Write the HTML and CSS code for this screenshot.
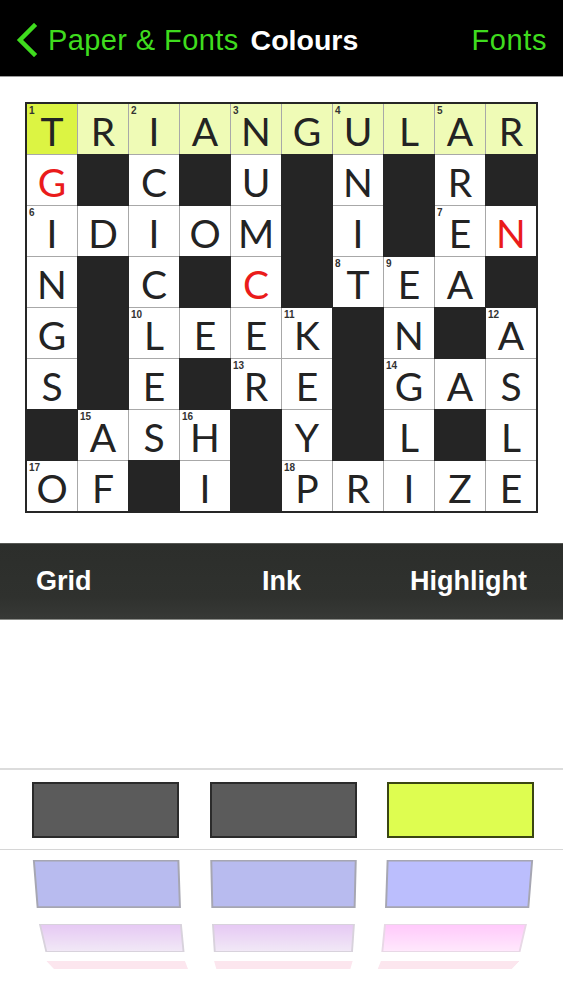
FILE: index.html
```html
<!DOCTYPE html>
<html lang="en">
<head>
<meta charset="utf-8">
<title>Colours</title>
<link rel="stylesheet" href="styles.css">
</head>
<body>
<header class="navbar">
  <a class="back">
    <svg class="chev" width="26" height="34" viewBox="0 0 26 34"><path d="M20 3 L6 17 L20 31" fill="none" stroke="#3fdc1e" stroke-width="4.5" stroke-linecap="square"/></svg>
    <span>Paper &amp; Fonts</span>
  </a>
  <h1 class="title">Colours</h1>
  <a class="right">Fonts</a>
</header>

<main class="board">
  <div class="xw">
    <div class="c h cur"><span class="n">1</span>T</div>
    <div class="c h">R</div>
    <div class="c h"><span class="n">2</span>I</div>
    <div class="c h">A</div>
    <div class="c h"><span class="n">3</span>N</div>
    <div class="c h">G</div>
    <div class="c h"><span class="n">4</span>U</div>
    <div class="c h">L</div>
    <div class="c h"><span class="n">5</span>A</div>
    <div class="c h">R</div>

    <div class="c r">G</div>
    <div class="c b"></div>
    <div class="c">C</div>
    <div class="c b"></div>
    <div class="c">U</div>
    <div class="c b"></div>
    <div class="c">N</div>
    <div class="c b"></div>
    <div class="c">R</div>
    <div class="c b"></div>

    <div class="c"><span class="n">6</span>I</div>
    <div class="c">D</div>
    <div class="c">I</div>
    <div class="c">O</div>
    <div class="c">M</div>
    <div class="c b"></div>
    <div class="c">I</div>
    <div class="c b"></div>
    <div class="c"><span class="n">7</span>E</div>
    <div class="c r">N</div>

    <div class="c">N</div>
    <div class="c b"></div>
    <div class="c">C</div>
    <div class="c b"></div>
    <div class="c r">C</div>
    <div class="c b"></div>
    <div class="c"><span class="n">8</span>T</div>
    <div class="c"><span class="n">9</span>E</div>
    <div class="c">A</div>
    <div class="c b"></div>

    <div class="c">G</div>
    <div class="c b"></div>
    <div class="c"><span class="n">10</span>L</div>
    <div class="c">E</div>
    <div class="c">E</div>
    <div class="c"><span class="n">11</span>K</div>
    <div class="c b"></div>
    <div class="c">N</div>
    <div class="c b"></div>
    <div class="c"><span class="n">12</span>A</div>

    <div class="c">S</div>
    <div class="c b"></div>
    <div class="c">E</div>
    <div class="c b"></div>
    <div class="c"><span class="n">13</span>R</div>
    <div class="c">E</div>
    <div class="c b"></div>
    <div class="c"><span class="n">14</span>G</div>
    <div class="c">A</div>
    <div class="c">S</div>

    <div class="c b"></div>
    <div class="c"><span class="n">15</span>A</div>
    <div class="c">S</div>
    <div class="c"><span class="n">16</span>H</div>
    <div class="c b"></div>
    <div class="c">Y</div>
    <div class="c b"></div>
    <div class="c">L</div>
    <div class="c b"></div>
    <div class="c">L</div>

    <div class="c"><span class="n">17</span>O</div>
    <div class="c">F</div>
    <div class="c b"></div>
    <div class="c">I</div>
    <div class="c b"></div>
    <div class="c"><span class="n">18</span>P</div>
    <div class="c">R</div>
    <div class="c">I</div>
    <div class="c">Z</div>
    <div class="c">E</div>
  </div>
</main>

<nav class="tabs">
  <span class="tab t-left">Grid</span>
  <span class="tab">Ink</span>
  <span class="tab t-right">Highlight</span>
</nav>

<section class="picker">
  <div class="wheel">
    <div class="row sel">
      <div class="sw gray"></div>
      <div class="sw gray"></div>
      <div class="sw lime"></div>
    </div>
    <div class="row r1">
      <div class="sw lav"></div>
      <div class="sw lav"></div>
      <div class="sw lav2"></div>
    </div>
    <div class="row r2">
      <div class="sw lil"></div>
      <div class="sw lil"></div>
      <div class="sw pnk"></div>
    </div>
    <div class="row r3">
      <div class="sw rose"></div>
      <div class="sw rose"></div>
      <div class="sw rose"></div>
    </div>
  </div>
</section>
</body>
</html>
```

FILE: styles.css
```css
html, body {
  margin: 0;
  padding: 0;
  background: #ffffff;
}

body {
  width: 563px;
  height: 1000px;
  overflow: hidden;
  font-family: "Liberation Sans", Arial, sans-serif;
}

/* ---------- navigation bar ---------- */
.navbar {
  background: #000;
  border-bottom: 1px solid #9a9a9a;
  display: flex;
  align-items: center;
  padding: 4px 16px 0 14px;
  box-sizing: border-box;
  height: 77px;
}

.back {
  display: flex;
  align-items: center;
  color: #3fdc1e;
  font-size: 29px;
  letter-spacing: 0.4px;
}

.chev {
  display: block;
  margin-right: 8px;
}

.title {
  margin: 0 0 0 12px;
  color: #ffffff;
  font-size: 28.5px;
  font-weight: 700;
}

.right {
  margin-left: auto;
  color: #3fdc1e;
  font-size: 29px;
  letter-spacing: 0.6px;
}

/* ---------- crossword ---------- */
.board {
  padding: 25px 0 0 25px;
}

.xw {
  width: 513px;
  height: 411px;
  box-sizing: border-box;
  border: 2px solid #262626;
  background: #a8a8a8;
  display: grid;
  grid-template-columns: repeat(10, 1fr);
  grid-template-rows: repeat(8, 1fr);
  gap: 1px;
}

.c {
  position: relative;
  background: #ffffff;
  display: flex;
  align-items: center;
  justify-content: center;
  padding-top: 6px;
  box-sizing: border-box;
  font-family: "Lato", "Open Sans", sans-serif;
  font-size: 39px;
  color: #232323;
  line-height: 0.9;
}

.c.h {
  background: #effbb6;
}

.c.cur {
  background: #dcf443;
}

.c.b {
  background: #252525;
  box-shadow: 0 0 0 1px #252525;
}

.c.r {
  color: #ea1b1b;
}

.n {
  position: absolute;
  top: 2px;
  left: 2px;
  font-family: "Liberation Sans", Arial, sans-serif;
  font-size: 10px;
  line-height: 10px;
  font-weight: 700;
  color: #333;
}

/* ---------- tab bar ---------- */
.tabs {
  margin-top: 30px;
  height: 77px;
  box-sizing: border-box;
  border-top: 1px solid #555753;
  border-bottom: 1px solid #8a8c88;
  background: linear-gradient(#2c2e2b, #2f312e 70%, #373936);
  display: grid;
  grid-template-columns: 1fr auto 1fr;
  align-items: center;
  padding: 0 36px;
  color: #ffffff;
  font-size: 27px;
  font-weight: 700;
}

.t-left {
  justify-self: start;
}

.t-right {
  justify-self: end;
}

/* ---------- colour picker wheel ---------- */
.picker {
  height: 381px;
  overflow: hidden;
  padding-top: 148px;
  box-sizing: border-box;
}

.wheel {
  display: grid;
  height: 82px;
  box-sizing: border-box;
  border-top: 2px solid #dcdcdc;
  border-bottom: 1px solid #d6d6d6;
  perspective: 1600px;
  align-items: center;
}

.row {
  grid-area: 1 / 1;
  height: 56px;
  display: grid;
  grid-template-columns: repeat(3, 147px);
  column-gap: 30.5px;
  padding-left: 32px;
  transform-origin: 50% 50% -165px;
  backface-visibility: hidden;
}

.r1 { transform: rotateX(-27deg); }
.r2 { transform: rotateX(-54deg); }
.r3 { transform: translateY(7px) rotateX(-76deg); }

.sw {
  box-sizing: border-box;
  height: 56px;
}

.gray {
  background: #5b5b5b;
  border: 2px solid #2b2b2b;
}

.lime {
  background: #defd50;
  border: 2px solid #3a4612;
}

.lav {
  background: #b8bbef;
  border: 2px solid #a6a6b2;
}

.lav2 {
  background: #bbbefd;
  border: 2px solid #a6a6b2;
}

.lil {
  background: linear-gradient(#e6c9f4, #f1e8f6);
  border: 2px solid #d8d2dc;
}

.pnk {
  background: linear-gradient(#ffc9fb, #ffe8fc);
  border: 2px solid #e8d8e6;
}

.rose {
  background: #fce6ee;
}
```
